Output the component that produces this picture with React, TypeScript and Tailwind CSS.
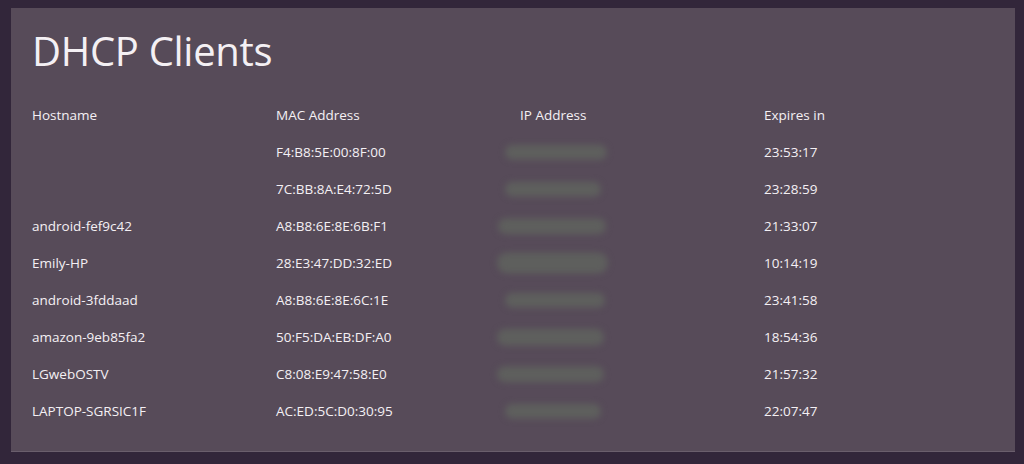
import React from "react";

const rows = [
  { host: "", mac: "F4:B8:5E:00:8F:00", exp: "23:53:17", blob: [505, 102, 15] },
  { host: "", mac: "7C:BB:8A:E4:72:5D", exp: "23:28:59", blob: [505, 96, 15] },
  { host: "android-fef9c42", mac: "A8:B8:6E:8E:6B:F1", exp: "21:33:07", blob: [498, 108, 16] },
  { host: "Emily-HP", mac: "28:E3:47:DD:32:ED", exp: "10:14:19", blob: [497, 111, 21] },
  { host: "android-3fddaad", mac: "A8:B8:6E:8E:6C:1E", exp: "23:41:58", blob: [505, 100, 15] },
  { host: "amazon-9eb85fa2", mac: "50:F5:DA:EB:DF:A0", exp: "18:54:36", blob: [497, 107, 17] },
  { host: "LGwebOSTV", mac: "C8:08:E9:47:58:E0", exp: "21:57:32", blob: [497, 107, 16] },
  { host: "LAPTOP-SGRSIC1F", mac: "AC:ED:5C:D0:30:95", exp: "22:07:47", blob: [505, 96, 15] },
];

export default function App() {
  return (
    <div
      className="w-[1024px] h-[464px] bg-[#32263a] pl-[11px] pr-[9px] pt-[8px] pb-[12px]"
      style={{ fontFamily: '"Open Sans", "Noto Sans", sans-serif' }}
    >
      <div className="h-full bg-[#574b59] border-b border-[#6a5e6c] pl-[21px] pt-[18px] text-[#f4f0f4]">
        <h1 className="text-[40px] leading-[50px] tracking-[-0.3px] font-normal">DHCP Clients</h1>
        <div className="mt-[21px] text-[13.5px]">
          <div className="grid grid-cols-[244px_244px_244px_244px] h-[37px] items-center">
            <div>Hostname</div>
            <div>MAC Address</div>
            <div>IP Address</div>
            <div>Expires in</div>
          </div>
          {rows.map((r, i) => (
            <div key={i} className="grid grid-cols-[244px_244px_244px_244px] h-[37px] items-center">
              <div>{r.host}</div>
              <div>{r.mac}</div>
              <div className="relative h-full">
                <div
                  className="absolute top-1/2 -translate-y-[55%] rounded-full bg-[#5e5f5d] blur-[3px]"
                  style={{ left: r.blob[0] - 520, width: r.blob[1], height: r.blob[2] }}
                />
              </div>
              <div>{r.exp}</div>
            </div>
          ))}
        </div>
      </div>
    </div>
  );
}
